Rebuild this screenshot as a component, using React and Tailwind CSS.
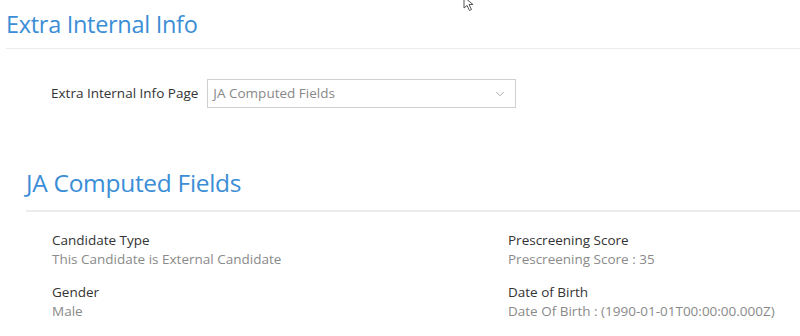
import { ChevronDown } from "lucide-react";

const Field = ({ label, value }) => (
  <div className="flex flex-col">
    <span className="text-[13.5px] leading-[19px] text-[#333333]">{label}</span>
    <span className="text-[13.5px] leading-[19px] text-[#8a8a8a]">{value}</span>
  </div>
);

const App = () => {
  return (
    <div
      className="relative w-[800px] h-[336px] overflow-hidden bg-white"
      style={{ fontFamily: '"Open Sans", "Noto Sans", sans-serif' }}
    >
      {/* mouse cursor */}
      <svg className="absolute left-[463px] top-[-4px]" width="14" height="16" viewBox="0 0 14 16">
        <path d="M1 1 L1 12 L4 9.5 L6.5 14.5 L8.5 13.5 L6 8.5 L10 8.5 Z" fill="white" stroke="#555" strokeWidth="1" />
      </svg>

      <div className="pl-[6px] pt-[6px]">
        <h1 className="text-[23.5px] leading-[36px] text-[#3b8ed6] tracking-[-0.3px]">Extra Internal Info</h1>
      </div>
      <div className="ml-[6px] mt-[6px] border-t border-[#ececec]" />

      <div className="flex items-center pl-[51px] pt-[30px]">
        <span className="text-[13.5px] text-[#333333] mr-[9px]">Extra Internal Info Page</span>
        <div className="flex items-center justify-between w-[309px] h-[29px] border border-[#cfcfcf] pl-[5px] pr-[8px]">
          <span className="text-[13.5px] text-[#888888]">JA Computed Fields</span>
          <ChevronDown size={14} strokeWidth={1.5} className="text-[#a0a0a0]" />
        </div>
      </div>

      <div className="pl-[26px] pt-[58px]">
        <h2 className="text-[24.5px] leading-[34px] text-[#3b8ed6] tracking-[-0.3px]">JA Computed Fields</h2>
      </div>
      <div className="ml-[26px] mt-[10px] border-t-2 border-[#ececec]" />

      <div className="grid grid-cols-[456px_1fr] gap-y-[14px] pl-[52px] pt-[19px]">
        <Field label="Candidate Type" value="This Candidate is External Candidate" />
        <Field label="Prescreening Score" value="Prescreening Score : 35" />
        <Field label="Gender" value="Male" />
        <Field label="Date of Birth" value="Date Of Birth : (1990-01-01T00:00:00.000Z)" />
      </div>
    </div>
  );
};

export default App;
